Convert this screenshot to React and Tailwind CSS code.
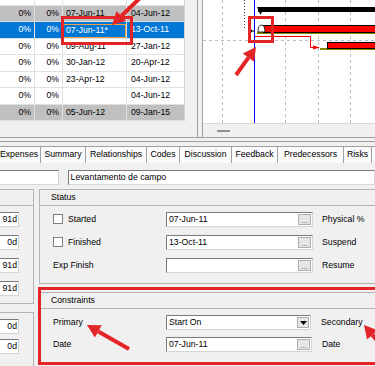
import React from 'react';

const RED = '#e42528';

const rows = [
  { a: '0%', b: '0%', c: '07-Jun-11', d: '04-Jun-12', kind: 'sum' },
  { a: '0%', b: '0%', c: '07-Jun-11*', d: '13-Oct-11', kind: 'sel' },
  { a: '0%', b: '0%', c: '09-Aug-11', d: '27-Jan-12' },
  { a: '0%', b: '0%', c: '30-Jan-12', d: '20-Apr-12' },
  { a: '0%', b: '0%', c: '23-Apr-12', d: '04-Jun-12' },
  { a: '0%', b: '0%', c: '', d: '04-Jun-12' },
  { a: '0%', b: '0%', c: '05-Jun-12', d: '09-Jan-15', kind: 'sum' },
];

const tabs = [
  { label: 'Expenses', w: 'w-[43px]' },
  { label: 'Summary', w: 'w-[45px]' },
  { label: 'Relationships', w: 'w-[61px]' },
  { label: 'Codes', w: 'w-[33px]' },
  { label: 'Discussion', w: 'w-[52px]' },
  { label: 'Feedback', w: 'w-[46px]' },
  { label: 'Predecessors', w: 'w-[66px]' },
  { label: 'Risks', w: 'w-[28px]' },
  { label: '', w: 'w-[40px]' },
];

const Arrow = ({ x1, y1, x2, y2, head = 13, half = 7 }) => {
  const dx = x2 - x1;
  const dy = y2 - y1;
  const len = Math.hypot(dx, dy);
  const ux = dx / len;
  const uy = dy / len;
  const bx = x2 - ux * head;
  const by = y2 - uy * head;
  const px = -uy;
  const py = ux;
  const pts = `${x2},${y2} ${bx + px * half},${by + py * half} ${bx - px * half},${by - py * half}`;
  return (
    <g>
      <line x1={x1} y1={y1} x2={bx} y2={by} stroke={RED} strokeWidth="4" />
      <polygon points={pts} fill={RED} />
    </g>
  );
};

const Dots = () => (
  <span className="my-[1px] mr-[1px] flex w-[13px] items-end justify-center border border-[#adadad] bg-[#e6e6e6] pb-[1px] text-[7px] leading-[5px] text-[#404040]">
    ...
  </span>
);

const Drop = () => (
  <span className="my-[1px] mr-[1px] flex w-[12px] items-center justify-center border border-[#adadad] bg-[#e6e6e6]">
    <svg width="7" height="4" viewBox="0 0 7 4">
      <polygon points="0,0 7,0 3.5,4" fill="#000" />
    </svg>
  </span>
);

const Field = ({ value, w = 'w-[147px]', btn }) => (
  <div className={`flex h-[15px] ${w} items-stretch border border-t-[#7a7a7a] border-l-[#7a7a7a] border-r-[#d4d4d4] border-b-[#d4d4d4] bg-white`}>
    <span className="flex flex-1 items-center pl-[2px]">{value}</span>
    {btn === 'dots' && <Dots />}
    {btn === 'drop' && <Drop />}
  </div>
);

const Check = () => (
  <span className="mr-[5px] h-[10px] w-[10px] border border-[#808080] bg-white" />
);

const NumBox = ({ value }) => (
  <div className="-ml-[1px] flex h-[15px] w-[20px] items-center justify-end border border-t-[#7a7a7a] border-l-[#7a7a7a] border-r-[#d4d4d4] border-b-[#d4d4d4] bg-white pr-[1px]">
    {value}
  </div>
);

const Gantt = () => (
  <svg width="172" height="123" className="block bg-white">
    {[19, 82, 115, 147].map(x => (
      <line key={x} x1={x + 0.5} y1="0" x2={x + 0.5} y2="123" stroke="#bdbdbd" strokeDasharray="3 3" />
    ))}
    <line x1="0" y1="40.5" x2="172" y2="40.5" stroke="#bdbdbd" strokeDasharray="3 3" />
    <line x1="41.5" y1="0" x2="41.5" y2="30" stroke="#404040" strokeDasharray="1 2" />
    <line x1="51.5" y1="0" x2="51.5" y2="123" stroke="#0000ff" />

    {/* summary bar */}
    <rect x="55" y="7" width="117" height="5" fill="#000" />
    <polygon points="54,7 61,7 57.5,15" fill="#000" />

    {/* task bar 1 */}
    <rect x="54" y="32" width="118" height="2" fill="#8a8a00" />
    <rect x="60.5" y="25.5" width="112" height="7" fill="#ff0000" stroke="#000" />
    <path d="M55 32 Q55 25 58.5 25 Q62 25 62 32 Z" fill="#fff" stroke="#000" strokeWidth="0.8" />
    <line x1="46" y1="31" x2="52" y2="31" stroke="#000" />
    <polygon points="46,31 49,29.5 49,32.5" fill="#000" />

    {/* link */}
    <polyline points="52,36.5 107.5,36.5 107.5,47.5 116,47.5" fill="none" stroke="#ff0000" />
    <polygon points="110,45.5 117,47.5 110,49.5" fill="#ff0000" />

    {/* task bar 2 */}
    <rect x="117" y="48" width="55" height="2" fill="#8a8a00" />
    <rect x="124.5" y="42.5" width="48" height="6" fill="#ff0000" stroke="#000" />
  </svg>
);

export default function App() {
  return (
    <div className="relative h-[366px] w-[375px] overflow-hidden bg-[#f0f0f0] font-['Liberation_Sans',Arial,sans-serif] text-[8.7px] text-black">
      {/* top: activity grid + gantt */}
      <div className="flex h-[137px]">
        <div className="w-[197px]">
          <div className="w-[185px] border-r border-[#d0d0d0] bg-white">
            <div className="flex h-[5.5px] border-b border-[#e0e0e0]">
              <div className="w-[35px] border-r border-[#e0e0e0]" />
              <div className="w-[28px] border-r border-[#e0e0e0]" />
              <div className="w-[64px] border-r border-[#e0e0e0]" />
              <div className="flex-1" />
            </div>
            {rows.map((r, i) => {
              const bg = r.kind === 'sum' ? 'bg-[#c0c0c0]' : r.kind === 'sel' ? 'bg-[#0078d7] text-white' : 'bg-white';
              return (
                <div key={i} className={`flex h-[16.5px] border-b border-[#e0e0e0] ${bg}`}>
                  <div className="flex w-[35px] items-center justify-end border-r border-[#e0e0e0] pr-[3px]">{r.a}</div>
                  <div className="flex w-[28px] items-center justify-end border-r border-[#e0e0e0] pr-[3px]">{r.b}</div>
                  <div className="flex w-[64px] items-center border-r border-[#e0e0e0]">
                    {r.kind === 'sel' ? (
                      <div className="mt-[2px] flex h-[14px] w-full items-center border border-[#f0a040] pl-[2px]">{r.c}</div>
                    ) : (
                      <span className="pl-[3px]">{r.c}</span>
                    )}
                  </div>
                  <div className="flex flex-1 items-center pl-[4px]">{r.d}</div>
                </div>
              );
            })}
          </div>
        </div>
        <div className="w-[6px] border-x border-[#a0a0a0]" />
        <div className="flex w-[172px] flex-col">
          <Gantt />
          <div className="flex flex-1 items-center border-t border-[#d8d8d8] pl-[14px]">
            <span className="h-[2px] w-[13px] bg-[#909090]" />
          </div>
        </div>
      </div>

      {/* horizontal splitter */}
      <div className="h-[5px] border-y border-[#a0a0a0]" />

      {/* tabs */}
      <div className="h-[23px] pt-[4px]">
        <div className="-ml-[2px] flex h-[17px]">
          {tabs.map((t, i) => (
            <div key={i} className={`flex ${t.w} shrink-0 items-center justify-center border-t border-r border-[#a0a0a0] bg-[#fafafa]`}>
              {t.label}
            </div>
          ))}
        </div>
      </div>

      {/* name row */}
      <div className="flex pt-[5px]">
        <div className="-ml-[2px] h-[15px] w-[63px] border border-t-[#7a7a7a] border-l-[#7a7a7a] border-r-[#d4d4d4] border-b-[#d4d4d4] bg-white" />
        <div className="ml-[9px] flex h-[15px] w-[320px] items-center border border-t-[#7a7a7a] border-l-[#7a7a7a] border-r-[#d4d4d4] border-b-[#d4d4d4] bg-white pl-[2px]">
          Levantamento de campo
        </div>
      </div>

      {/* detail panels */}
      <div className="mt-[4px] flex items-start">
        <div className="flex w-[34px] shrink-0 flex-col">
          <div className="h-[115px] border-y border-r border-[#b4b4b4]">
            <div className="h-[16px] border-b border-[#b4b4b4]" />
            <div className="flex flex-col gap-[8px] pt-[6px]">
              <NumBox value="91d" />
              <NumBox value="0d" />
              <NumBox value="91d" />
              <NumBox value="91d" />
            </div>
          </div>
          <div className="mt-[8px] h-[60px] border-t border-r border-[#b4b4b4]">
            <div className="flex flex-col gap-[5px] pt-[6px]">
              <NumBox value="0d" />
              <NumBox value="0d" />
            </div>
          </div>
        </div>

        <div className="ml-[5px] flex w-[345px] shrink-0 flex-col">
          {/* Status */}
          <div className="h-[95px] border-y border-l border-[#b4b4b4]">
            <div className="flex h-[16px] items-center border-b border-[#b4b4b4] pl-[11px]">Status</div>
            <div className="flex flex-col gap-[8px] pt-[6px]">
              <div className="flex h-[15px] items-center">
                <div className="flex w-[126px] items-center pl-[13px]">
                  <Check />
                  Started
                </div>
                <Field value="07-Jun-11" btn="dots" />
                <span className="pl-[9px]">Physical %</span>
              </div>
              <div className="flex h-[15px] items-center">
                <div className="flex w-[126px] items-center pl-[13px]">
                  <Check />
                  Finished
                </div>
                <Field value="13-Oct-11" btn="dots" />
                <span className="pl-[9px]">Suspend</span>
              </div>
              <div className="flex h-[15px] items-center">
                <div className="w-[126px] pl-[13px]">Exp Finish</div>
                <Field value="" btn="dots" />
                <span className="pl-[9px]">Resume</span>
              </div>
            </div>
          </div>

          {/* Constraints */}
          <div className="mt-[8px] h-[70px] border-t border-l border-[#b4b4b4]">
            <div className="flex h-[16px] items-center border-b border-[#b4b4b4] pl-[11px]">Constraints</div>
            <div className="flex flex-col gap-[7px] pt-[6px]">
              <div className="flex h-[15px] items-center">
                <div className="w-[126px] pl-[13px]">Primary</div>
                <Field value="Start On" w="w-[145px]" btn="drop" />
                <span className="pl-[10px]">Secondary</span>
              </div>
              <div className="flex h-[15px] items-center">
                <div className="w-[126px] pl-[13px]">Date</div>
                <Field value="07-Jun-11" w="w-[146px]" btn="dots" />
                <span className="pl-[10px]">Date</span>
              </div>
            </div>
          </div>
        </div>
      </div>

      {/* red annotations drawn on top of the screenshot */}
      <svg className="pointer-events-none absolute inset-0" width="375" height="366">
        <rect x="62.5" y="17.5" width="69" height="26" fill="none" stroke={RED} strokeWidth="3" />
        <rect x="249.5" y="17.5" width="23" height="24" fill="none" stroke={RED} strokeWidth="3" />
        <rect x="39.5" y="288.5" width="340" height="75" fill="none" stroke={RED} strokeWidth="3" />
        <Arrow x1={140} y1={-2} x2={112} y2={25} />
        <Arrow x1={236} y1={75} x2={256} y2={47} />
        <Arrow x1={129} y1={349} x2={87} y2={325} />
        <Arrow x1={392} y1={358} x2={364} y2={325} />
      </svg>
    </div>
  );
}
